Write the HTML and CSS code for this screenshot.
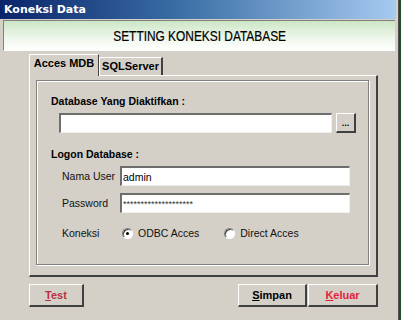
FILE: index.html
```html
<!DOCTYPE html>
<html lang="en">
<head>
    <meta charset="UTF-8">
    <title>Koneksi Data</title>
    <link rel="stylesheet" href="styles.css">
</head>
<body>
    <div class="window">
        <!-- Title bar -->
        <div class="titlebar">Koneksi Data</div>

        <!-- Header -->
        <div class="header"><span class="header-text">SETTING KONEKSI DATABASE</span></div>

        <div class="content">
            <!-- Tabs -->
            <div class="tabs">
                <div class="tab active">Acces MDB</div>
                <div class="tab">SQLServer</div>
            </div>

            <div class="tab-panel">
                <div class="group">
                    <div class="section-label">Database Yang Diaktifkan :</div>
                    <div class="db-row">
                        <input type="text" class="field db-field">
                        <button class="btn browse">...</button>
                    </div>

                    <div class="section-label logon">Logon Database :</div>
                    <div class="form-row">
                        <label>Nama User</label>
                        <input type="text" class="field" value="admin">
                    </div>
                    <div class="form-row">
                        <label>Password</label>
                        <input type="text" class="field pass" value="********************">
                    </div>
                    <div class="form-row radio-row">
                        <label>Koneksi</label>
                        <span class="radio checked"></span><span class="radio-text">ODBC Acces</span>
                        <span class="radio second"></span><span class="radio-text">Direct Acces</span>
                    </div>
                </div>
            </div>

            <!-- Buttons -->
            <div class="buttons">
                <button class="btn action test"><u>T</u>est</button>
                <div class="spacer"></div>
                <button class="btn action simpan"><u>S</u>impan</button>
                <button class="btn action keluar"><u>K</u>eluar</button>
            </div>
        </div>
    </div>
</body>
</html>
```

FILE: styles.css
```css
* {
    margin: 0;
    padding: 0;
    box-sizing: border-box;
}

body {
    font-family: 'Liberation Sans', Arial, sans-serif;
    font-size: 11px;
    background-color: #1f4a2a;
    width: 401px;
    height: 320px;
    overflow: hidden;
}

.window {
    width: 399px;
    height: 320px;
    background-color: #d4d0c8;
    border-right: 1px solid #505050;
}

/* Title bar */
.titlebar {
    height: 19px;
    width: 396px;
    background: linear-gradient(to right, #0a246a 0%, #3a6ea5 45%, #a6caf0 100%);
    color: #fff;
    font-family: 'DejaVu Sans', sans-serif;
    font-weight: bold;
    font-size: 11px;
    line-height: 19px;
    padding-left: 4px;
}

/* Header */
.header {
    height: 31px;
    width: 392px;
    margin: 1px 0 0 3px;
    background: linear-gradient(to bottom, #cde6c6 0%, #eef7ec 60%, #ffffff 100%);
    border-top: 1px solid #808080;
    border-left: 1px solid #808080;
    border-bottom: 1px solid #ffffff;
    text-align: center;
    line-height: 30px;
}

.header-text {
    display: inline-block;
    font-size: 14px;
    color: #000;
    -webkit-text-stroke: 0.2px #000;
    transform: scaleX(0.85);
}

.content {
    padding: 3px 0 0 29px;
    width: 378px;
}

/* Tabs */
.tabs {
    display: flex;
    align-items: flex-end;
    height: 21px;
}

.tab {
    width: 64px;
    height: 18px;
    border-top: 1px solid #fff;
    border-left: 1px solid #fff;
    border-right: 2px solid #404040;
    font-weight: bold;
    font-size: 11px;
    line-height: 16px;
    text-align: center;
    white-space: nowrap;
    color: #000;
}

.tab.active {
    width: 70px;
    height: 22px;
    line-height: 17px;
    border-right: 1px solid #404040;
    background-color: #d4d0c8;
    margin-bottom: -1px;
    position: relative;
    z-index: 1;
}

.tab-panel {
    height: 202px;
    border-top: 1px solid #fff;
    border-left: 1px solid #fff;
    border-right: 2px solid #404040;
    border-bottom: 2px solid #404040;
    padding: 4px 7px 0 6px;
}

.group {
    height: 185px;
    border: 1px solid #808080;
    box-shadow: inset 1px 1px 0 #fff, 1px 1px 0 #fff;
    padding: 13px 0 0 14px;
}

.section-label {
    font-weight: bold;
    font-size: 10.5px;
    height: 14px;
    line-height: 14px;
}

.section-label.logon {
    margin-top: 14px;
}

.db-row {
    display: flex;
    gap: 4px;
    margin: 5px 0 0 8px;
}

.field {
    height: 20px;
    background-color: #fff;
    border-top: 2px solid #6e6e6e;
    border-left: 2px solid #6e6e6e;
    border-right: 1px solid #eee;
    border-bottom: 1px solid #eee;
    font-family: 'Liberation Sans', Arial, sans-serif;
    font-size: 10.5px;
    padding-left: 1px;
    outline: none;
}

.db-field {
    width: 273px;
}

.btn {
    background-color: #d4d0c8;
    border-top: 1px solid #fff;
    border-left: 1px solid #fff;
    border-right: 2px solid #404040;
    border-bottom: 2px solid #404040;
    font-family: 'Liberation Sans', Arial, sans-serif;
    color: #000;
}

.browse {
    width: 20px;
    height: 20px;
    font-size: 9px;
    font-weight: bold;
    line-height: 12px;
}

.form-row {
    display: flex;
    align-items: center;
    margin: 5px 0 0 11px;
    height: 20px;
}

.form-row + .form-row {
    margin-top: 7px;
}

.form-row label {
    width: 58px;
    font-size: 10.5px;
    color: #111;
}

.form-row .field {
    width: 230px;
}

.form-row .field.pass {
    font-size: 9px;
    color: #333;
}

.form-row.radio-row {
    margin-top: 10px;
}

.radio {
    width: 11px;
    height: 11px;
    border-radius: 50%;
    background: #fff;
    border: 1px solid #808080;
    border-right-color: #fff;
    border-bottom-color: #fff;
    box-shadow: inset 1px 1px 0 #404040;
    margin: 0 5px 0 2px;
    position: relative;
}

.radio.checked::after {
    content: "";
    position: absolute;
    width: 3px;
    height: 3px;
    border-radius: 50%;
    background: #000;
    left: 3px;
    top: 3px;
}

.radio.second {
    margin-left: 25px;
}

.radio-text {
    font-size: 10.5px;
    color: #111;
}

/* Bottom buttons */
.buttons {
    display: flex;
    margin-top: 7px;
    height: 23px;
}

.spacer {
    flex: 1;
}

.action {
    height: 23px;
    font-size: 11px;
    font-weight: bold;
}

.test {
    width: 55px;
    color: #b83040;
}

.simpan {
    width: 69px;
}

.keluar {
    width: 70px;
    margin-left: 1px;
    color: #e8203a;
}
```
